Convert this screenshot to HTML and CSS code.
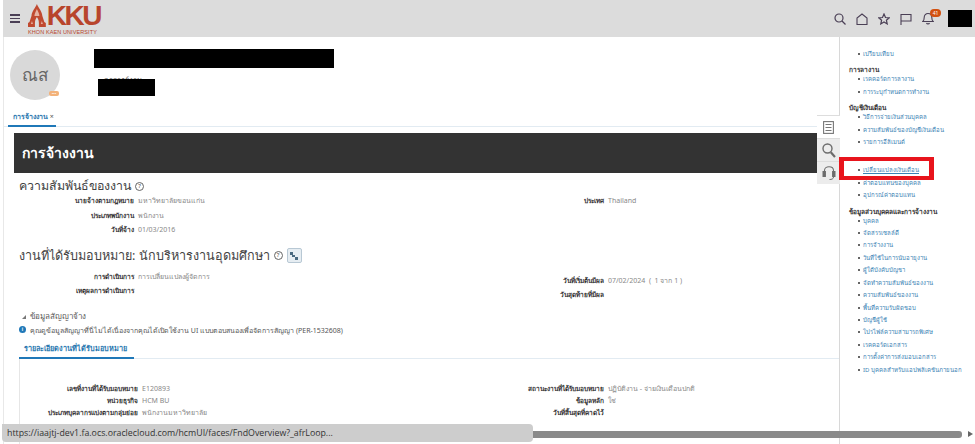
FILE: index.html
```html
<!DOCTYPE html>
<html lang="th">
<head>
  <meta charset="UTF-8">
  <title>การจ้างงาน</title>
  <link rel="stylesheet" href="styles.css">
</head>
<body>
  <header class="topbar">
    <div class="hamburger"><span></span><span></span><span></span></div>
    <div class="logo">
      <div class="logo-top">
        <svg class="logo-mark" viewBox="0 0 18 23" width="18" height="23">
          <path d="M9 0C7.5 4 4 7 3.5 12L1.5 18L0 19V23H7V19C7 16 8 14.5 9 13C10 14.5 11 16 11 19V23H18V19L16.5 18L14.5 12C14 7 10.500 4 9 0Z" fill="#c04a30"/>
          <path d="M9 5C8 7.500 6.500 9.500 6.500 12H11.500C11.500 9.500 10 7.500 9 5ZM4 17L3 20H5ZM14 17L13 20H15Z" fill="#e6b3a2"/>
        </svg>
        <div class="logo-big">KKU</div>
      </div>
      <div class="logo-small">KHON KAEN UNIVERSITY</div>
    </div>
    <div class="top-icons">
      <svg width="12" height="12" viewBox="0 0 12 12" fill="none" stroke="#4a3f55" stroke-width="1.2"><circle cx="5" cy="5" r="4"/><path d="M8 8L11.500 11.500"/></svg>
      <svg width="12" height="12" viewBox="0 0 12 12" fill="none" stroke="#4a3f55" stroke-width="1.1"><path d="M1 11.500V5L6 1L11 5V11.500Z"/></svg>
      <svg width="12" height="12" viewBox="0 0 12 12" fill="none" stroke="#4a3f55" stroke-width="1.2"><path d="M6 1L7.500 4.500L11.200 4.800L8.400 7.200L9.200 10.900L6 9L2.800 10.900L3.600 7.200L.8 4.800L4.500 4.500Z"/></svg>
      <svg width="12" height="12" viewBox="0 0 12 12" fill="none" stroke="#4a3f55" stroke-width="1.1"><path d="M1 12V1.500H11V8H1"/></svg>
      <div class="bell">
        <svg width="12" height="13" viewBox="0 0 12 13" fill="none" stroke="#4a3f55" stroke-width="1.1"><path d="M.8 9.500C2.200 8.300 2.200 7 2.200 5.500C2.200 3.200 3.800 1.500 6 1.500C8.200 1.500 9.800 3.200 9.800 5.500C9.800 7 9.800 8.300 11.200 9.500Z"/><path d="M4.500 11C5 12.200 7 12.200 7.500 11"/></svg>
        <span class="badge">41</span>
      </div>
      <div class="user-box"></div>
    </div>
  </header>

  <div class="page">
    <main class="main">
      <section class="profile">
        <div class="avatar">ณส<span class="avatar-dot">•••</span></div>
        <div class="profile-info">
          <div class="redact redact-name"></div>
          <div class="profile-sub">
            <span class="profile-subtext">อาจารย์งาน</span>
            <div class="redact redact-sub"></div>
          </div>
        </div>
      </section>

      <nav class="tabs">
        <div class="tab">การจ้างงาน <span class="tab-x">×</span></div>
      </nav>

      <div class="banner">การจ้างงาน</div>

      <div class="content">
        <h2 class="heading">ความสัมพันธ์ของงาน <span class="help">?</span></h2>
        <div class="form form-rel">
          <div class="col col-left">
            <div class="lbl">นายจ้างตามกฎหมาย</div><div class="val">มหาวิทยาลัยขอนแก่น</div>
            <div class="lbl">ประเภทพนักงาน</div><div class="val">พนักงาน</div>
            <div class="lbl">วันที่จ้าง</div><div class="val">01/03/2016</div>
          </div>
          <div class="col col-right">
            <div class="lbl">ประเทศ</div><div class="val">Thailand</div>
          </div>
        </div>

        <h2 class="heading heading-job">งานที่ได้รับมอบหมาย: นักบริหารงานอุดมศึกษา <span class="help">?</span>
          <span class="org-btn">
            <svg width="10" height="10" viewBox="0 0 10 10" fill="#4a6a80"><rect x="1" y="1" width="3" height="3"/><rect x="3" y="4" width="3" height="2"/><rect x="6" y="6" width="3" height="3"/></svg>
          </span>
        </h2>
        <div class="form form-job">
          <div class="col col-left">
            <div class="lbl">การดำเนินการ</div><div class="val">การเปลี่ยนแปลงผู้จัดการ</div>
            <div class="lbl">เหตุผลการดำเนินการ</div><div class="val"></div>
          </div>
          <div class="col col-right">
            <div class="lbl">วันที่เริ่มต้นมีผล</div><div class="val">07/02/2024 &nbsp;( &nbsp;1 จาก 1 )</div>
            <div class="lbl">วันสุดท้ายที่มีผล</div><div class="val"></div>
          </div>
        </div>

        <div class="contract-head"><span class="tri"></span>ข้อมูลสัญญาจ้าง</div>
        <div class="notice"><span class="info">i</span>คุณดูข้อมูลสัญญาที่นี่ไม่ได้เนื่องจากคุณได้เปิดใช้งาน UI แบบตอบสนองเพื่อจัดการสัญญา (PER-1532608)</div>

        <div class="subtabs"><div class="subtab">รายละเอียดงานที่ได้รับมอบหมาย</div></div>

        <div class="detail">
          <div class="form form-detail">
            <div class="col col-left">
              <div class="lbl">เลขที่งานที่ได้รับมอบหมาย</div><div class="val">E120893</div>
              <div class="lbl">หน่วยธุรกิจ</div><div class="val">HCM BU</div>
              <div class="lbl">ประเภทบุคลากรแบ่งตามกลุ่มย่อย</div><div class="val">พนักงานมหาวิทยาลัย</div>
            </div>
            <div class="col col-right">
              <div class="lbl">สถานะงานที่ได้รับมอบหมาย</div><div class="val">ปฏิบัติงาน - จ่ายเงินเดือนปกติ</div>
              <div class="lbl">ข้อมูลหลัก</div><div class="val">ใช่</div>
              <div class="lbl">วันที่สิ้นสุดที่คาดไว้</div><div class="val"></div>
            </div>
          </div>
        </div>
      </div>
    </main>

    <aside class="side">
      <ul class="side-list first">
        <li><a>เปรียบเทียบ</a></li>
      </ul>
      <h4>การลางาน</h4>
      <ul class="side-list">
        <li><a>เรคคอร์ดการลางาน</a></li>
        <li><a>การระบุกำหนดการทำงาน</a></li>
      </ul>
      <h4>บัญชีเงินเดือน</h4>
      <ul class="side-list">
        <li><a>วิธีการจ่ายเงินส่วนบุคคล</a></li>
        <li><a>ความสัมพันธ์ของบัญชีเงินเดือน</a></li>
        <li><a>รายการอีลิเมนต์</a></li>
      </ul>
      <ul class="side-list comp">
        <li class="marked"><a>เปลี่ยนแปลงเงินเดือน</a></li>
        <li><a>ค่าตอบแทนของบุคคล</a></li>
        <li><a>อุปกรณ์ค่าตอบแทน</a></li>
      </ul>
      <h4>ข้อมูลส่วนบุคคลและการจ้างงาน</h4>
      <ul class="side-list">
        <li><a>บุคคล</a></li>
        <li><a>จัดสรรเซลล์ดี</a></li>
        <li><a>การจ้างงาน</a></li>
        <li><a>วันที่ใช้ในการนับอายุงาน</a></li>
        <li><a>ผู้ใต้บังคับบัญชา</a></li>
        <li><a>จัดทำความสัมพันธ์ของงาน</a></li>
        <li><a>ความสัมพันธ์ของงาน</a></li>
        <li><a>พื้นที่ความรับผิดชอบ</a></li>
        <li><a>บัญชีผู้ใช้</a></li>
        <li><a>โปรไฟล์ความสามารถพิเศษ</a></li>
        <li><a>เรคคอร์ดเอกสาร</a></li>
        <li><a>การตั้งค่าการส่งมอบเอกสาร</a></li>
        <li><a>ID บุคคลสำหรับแอปพลิเคชันภายนอก</a></li>
      </ul>
    </aside>
  </div>

  <div class="side-tools">
    <div class="tool tool-on">
      <svg width="11" height="13" viewBox="0 0 11 13" fill="none" stroke="#777" stroke-width="1.1"><rect x=".6" y=".6" width="9.800" height="11.800"/><path d="M2.500 3.500H8.500M2.500 6.500H8.500M2.500 9.500H8.500"/></svg>
    </div>
    <div class="tool">
      <svg width="14" height="15" viewBox="0 0 14 15" fill="none" stroke="#6c6c6c"><circle cx="5.500" cy="5.500" r="4.500" stroke-width="1.400"/><path d="M8.800 9.200L13 14" stroke-width="2.200"/></svg>
    </div>
    <div class="tool">
      <svg width="14" height="16" viewBox="0 0 14 16" fill="none" stroke="#6c6c6c"><path d="M2.500 7V5.500C2.500 .5 11.500 .5 11.500 5.500V7" stroke-width="1.100"/><rect x="1" y="6.500" width="2.400" height="5" fill="#6c6c6c"/><rect x="10.600" y="6.500" width="2.400" height="5" fill="#6c6c6c"/><path d="M11.500 12C11.500 14 9.500 14.500 7.500 14.500" stroke-width="1"/></svg>
    </div>
  </div>

  <div class="marker"></div>

  <div class="hscroll"><div class="hscroll-thumb"></div><span class="hscroll-arrow"></span></div>
  <div class="status">https://iaajtj-dev1.fa.ocs.oraclecloud.com/hcmUI/faces/FndOverview?_afrLoop...</div>
</body>
</html>
```

FILE: styles.css
```css
* {
  box-sizing: border-box;
}
body {
  margin: 0;
  width: 975px;
  height: 444px;
  overflow: hidden;
  position: relative;
  background: #fff;
  font-family: "Noto Sans", "Liberation Sans", "DejaVu Sans", sans-serif;
  color: #333;
}

/* top bar */
.topbar {
  height: 37px;
  margin-left: 3px;
  background: #dcdcdc;
  display: flex;
  align-items: center;
  padding-left: 7px;
  padding-right: 3px;
}
.hamburger {
  width: 10px;
  display: flex;
  flex-direction: column;
  gap: 2px;
  margin-right: 8px;
}
.hamburger span {
  height: 1.5px;
  background: #4a3f55;
}
.logo {
  width: 72px;
  height: 33px;
  align-self: flex-start;
  padding-top: 4px;
}
.logo-top {
  display: flex;
  height: 24px;
  gap: 1px;
}
.logo-big {
  font: bold 28px/24px "Liberation Sans", sans-serif;
  letter-spacing: -2.500px;
  color: #b8452c;
}
.logo-small {
  font: 5.500px/6px "Liberation Sans", sans-serif;
  color: #b8452c;
  white-space: nowrap;
  margin-top: 1px;
  letter-spacing: .1px;
}
.top-icons {
  margin-left: auto;
  display: flex;
  align-items: center;
  gap: 10px;
}
.bell {
  position: relative;
  display: flex;
  margin-right: 4px;
}
.badge {
  position: absolute;
  left: 8px;
  top: -3px;
  width: 11px;
  height: 8px;
  border-radius: 4px;
  background: #d2500f;
  color: #fff;
  font-size: 5px;
  line-height: 8px;
  text-align: center;
}
.user-box {
  width: 24px;
  height: 17px;
  background: #000;
}

/* page columns */
.page {
  display: flex;
  height: 407px;
  overflow: hidden;
}
.main {
  width: 837px;
  margin-left: 3px;
  border-left: 1px solid #e8e8e8;
  border-right: 1px solid #d8d8d8;
  flex: none;
}
.side {
  flex: 1;
  padding: 11px 0 0 9px;
}

/* profile header */
.profile {
  display: flex;
  height: 71px;
  padding: 13px 0 0 6px;
}
.avatar {
  width: 50px;
  height: 50px;
  border-radius: 50%;
  background: #d9d9d9;
  color: #666;
  font-size: 17px;
  line-height: 50px;
  text-align: center;
  position: relative;
}
.avatar-dot {
  position: absolute;
  left: 39px;
  top: 41px;
  width: 10px;
  height: 5px;
  border-radius: 2px;
  background: #f3b27a;
  color: #fff;
  font-size: 4px;
  line-height: 5px;
}
.profile-info {
  margin-left: 34px;
}
.redact {
  background: #000;
}
.redact-name {
  width: 240px;
  height: 19px;
  margin-top: -1px;
}
.profile-sub {
  position: relative;
  margin-top: 7px;
  padding-left: 10px;
  height: 20px;
  font-size: 7.500px;
  line-height: 8px;
  color: #555;
}
.profile-subtext {
  position: relative;
  top: 1px;
}
.redact-sub {
  position: absolute;
  left: 4px;
  top: 4px;
  width: 57px;
  height: 17px;
}

/* tabs */
.tabs {
  height: 19px;
  border-bottom: 1px solid #e2ebf2;
  padding-left: 4px;
}
.tab {
  width: 48px;
  height: 19px;
  padding-left: 5px;
  border-bottom: 2px solid #1f78b8;
  color: #2a78b0;
  font-size: 7px;
  font-weight: 700;
  line-height: 18px;
  white-space: nowrap;
}
.tab-x {
  color: #555;
  font-weight: 400;
}

/* banner */
.banner {
  height: 40px;
  margin: 6px 0 0 10px;
  background: #333;
  color: #fff;
  font-size: 14px;
  font-weight: 700;
  line-height: 39px;
  padding-left: 8px;
}

/* content */
.content {
  padding-left: 15px;
}
.heading {
  margin: 4px 0 0;
  font-size: 12.400px;
  font-weight: 400;
  color: #444;
  line-height: 18px;
  height: 18px;
  display: flex;
  align-items: center;
  gap: 4px;
  white-space: nowrap;
}
.help {
  width: 9px;
  height: 9px;
  border: 1px solid #666;
  border-radius: 50%;
  font-size: 6px;
  line-height: 7px;
  text-align: center;
}
.heading-job {
  margin-top: 9px;
  font-size: 12.600px;
}
.org-btn {
  width: 15px;
  height: 15px;
  border: 1px solid #b8c8d4;
  background: #e6edf2;
  border-radius: 2px;
  display: flex;
  align-items: center;
  justify-content: center;
}
.form {
  display: flex;
  font-size: 7px;
  line-height: 14.500px;
}
.col {
  display: grid;
  align-content: start;
  column-gap: 4px;
}
.col-left {
  width: 485px;
  grid-template-columns: 115px 1fr;
}
.col-right {
  flex: 1;
  grid-template-columns: 100px 1fr;
}
.lbl {
  text-align: right;
  font-size: 6.500px;
  font-weight: 700;
  color: #333;
  white-space: nowrap;
}
.val {
  color: #888;
  white-space: nowrap;
}
.form-rel {
  margin-top: -1px;
}
.form-job {
  margin-top: 5px;
}
.form-job .col-right {
  margin-top: 4px;
}
.contract-head {
  margin-top: 8px;
  font-size: 8px;
  color: #555;
  display: flex;
  align-items: center;
  gap: 4px;
  padding-left: 3px;
  height: 12px;
}
.tri {
  width: 0;
  height: 0;
  border-left: 4px solid transparent;
  border-bottom: 4px solid #777;
}
.notice {
  font-size: 7px;
  color: #555;
  display: flex;
  align-items: center;
  gap: 4px;
  height: 12px;
  margin-top: 2px;
  white-space: nowrap;
}
.info {
  width: 7px;
  height: 7px;
  margin-top: -3px;
  border-radius: 50%;
  background: #1f78b8;
  color: #fff;
  font: bold 5px/7px "Liberation Sans", sans-serif;
  text-align: center;
  flex: none;
}
.subtabs {
  height: 18px;
  margin-top: 4px;
  border-bottom: 1px solid #e2ebf2;
}
.subtab {
  width: 115px;
  height: 18px;
  border-bottom: 2px solid #1f78b8;
  color: #2a78b0;
  font-size: 7.300px;
  font-weight: 700;
  line-height: 15px;
  padding-left: 5px;
  white-space: nowrap;
}
.detail {
  border-left: 1px solid #e6e6e6;
  height: 90px;
  padding-top: 24px;
}
.form-detail {
  line-height: 12px;
}
.form-detail .col-left {
  width: 484px;
  grid-template-columns: 118px 1fr;
}

/* right column */
.side h4 {
  margin: 6px 0 -1px;
  font-size: 6.500px;
  line-height: 8px;
  font-weight: 700;
  color: #333;
}
.side-list {
  list-style: none;
  margin: 0;
  padding: 0 0 0 14px;
  font-size: 6px;
  line-height: 12.400px;
}
.side-list li {
  position: relative;
  white-space: nowrap;
}
.side-list li::before {
  content: "";
  position: absolute;
  left: -5px;
  top: 5px;
  width: 2px;
  height: 2px;
  background: #333;
  border-radius: 50%;
}
.side-list a {
  color: #3a82b4;
}
.side-list.comp {
  margin-top: 16px;
  margin-bottom: 6px;
}
.marked a {
  text-decoration: underline;
}

/* floating things */
.side-tools {
  position: absolute;
  left: 817px;
  top: 115px;
  width: 23px;
}
.tool {
  height: 23px;
  background: #ececec;
  border-top: 1px solid #ddd;
  display: flex;
  align-items: center;
  justify-content: center;
}
.tool-on {
  background: #fff;
  height: 23px;
}
.marker {
  position: absolute;
  left: 839px;
  top: 157px;
  width: 95px;
  height: 23px;
  border: 5px solid #e8141c;
  border-width: 4px 5px;
}
.status {
  position: absolute;
  left: 2px;
  top: 424px;
  width: 531px;
  height: 18px;
  background: #cdcdcd;
  border-radius: 0 4px 4px 4px;
  color: #333;
  font: 8.800px/18px "Open Sans", "Noto Sans", sans-serif;
  padding-left: 5px;
  white-space: nowrap;
}
.hscroll {
  position: absolute;
  left: 3px;
  top: 431px;
  width: 972px;
  height: 7px;
}
.hscroll-thumb {
  position: absolute;
  left: 0;
  right: 13px;
  top: 0;
  height: 7px;
  background: #8a8a8a;
  border-radius: 3px;
}
.hscroll-arrow {
  position: absolute;
  right: 2px;
  top: 0;
  width: 0;
  height: 0;
  border-left: 5px solid #666;
  border-top: 3.500px solid transparent;
  border-bottom: 3.500px solid transparent;
}
```
